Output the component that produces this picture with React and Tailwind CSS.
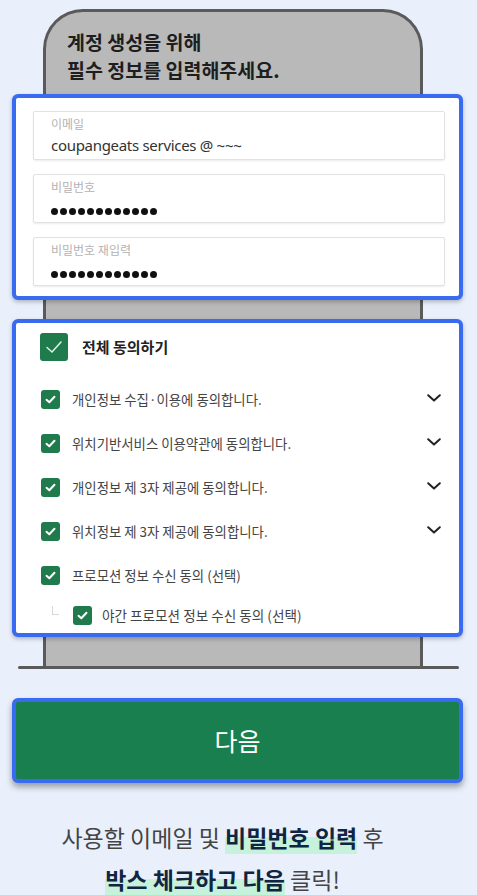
import React from "react";

const F = { fontFamily: '"Noto Sans CJK KR", "Noto Sans", sans-serif' };

function Check({ big }) {
  if (big) {
    return (
      <div className="w-[28px] h-[28px] rounded-[3px] bg-[#1f7b4c] flex items-center justify-center shrink-0">
        <svg width="22" height="22" viewBox="0 0 22 22" fill="none">
          <path d="M4 11.5 L9 16 L18 6" stroke="#d9efe2" strokeWidth="1.6" strokeLinecap="round" strokeLinejoin="round" />
        </svg>
      </div>
    );
  }
  return (
    <div className="w-[19px] h-[19px] rounded-[3px] bg-[#1f7b4c] flex items-center justify-center shrink-0">
      <svg width="13" height="13" viewBox="0 0 13 13" fill="none">
        <path d="M2.5 6.8 L5.3 9.3 L10.5 3.8" stroke="#ffffff" strokeWidth="2" strokeLinecap="round" strokeLinejoin="round" />
      </svg>
    </div>
  );
}

function Chevron() {
  return (
    <svg width="14" height="8" viewBox="0 0 14 8" fill="none">
      <path d="M1.2 1.2 L7 6.6 L12.8 1.2" stroke="#222" strokeWidth="2" strokeLinecap="round" strokeLinejoin="round" />
    </svg>
  );
}

function Dots() {
  return (
    <div className="flex gap-[2px]">
      {Array.from({ length: 12 }).map((_, i) => (
        <span key={i} className="block w-[7px] h-[7px] rounded-full bg-[#111]" />
      ))}
    </div>
  );
}

function Field({ label, children }) {
  return (
    <div className="h-[49px] border border-[#e2e2e2] rounded-[2px] bg-white shadow-[0_1px_2px_rgba(0,0,0,0.08)] pl-[17px] flex flex-col">
      <div className="text-[12px] leading-[16px] text-[#b3b3b3] mt-[4px]">{label}</div>
      <div className="h-[24px] flex items-center mt-[1px]">{children}</div>
    </div>
  );
}

function Row({ text, chevron }) {
  return (
    <div className="h-[44px] flex items-center">
      <div className="ml-[1px]"><Check /></div>
      <div className="ml-[12px] text-[13.4px] text-[#444]">{text}</div>
      <div className="flex-1" />
      {chevron && <div className="mr-[18px] mt-[-2px]"><Chevron /></div>}
    </div>
  );
}

export default function App() {
  return (
    <div className="w-[477px] h-[895px] bg-[#e9f0fc] overflow-hidden" style={F}>
      <div className="pt-[9px]">
        <div className="ml-[43px] w-[380px] border-[3px] border-b-0 border-[#5a5a5a] rounded-t-[40px] bg-[#b9b9b9] pb-[29px]">
          <div className="pl-[21px] pt-[16px] text-[19.5px] leading-[28px] font-bold text-[#1e1e1e]">
            <div>계정 생성을 위해</div>
            <div>필수 정보를 입력해주세요.</div>
          </div>

          <div className="mt-[10px] ml-[-34px] w-[451px] border-[4px] border-[#386bf0] rounded-[6px] bg-white shadow-[0_2px_4px_rgba(0,0,0,0.25)] pl-[17px] pr-[14px] pt-[13px] pb-[10px] flex flex-col gap-[14px]">
            <Field label="이메일">
              <span className="text-[15px] text-[#333] tracking-[-0.3px]" style={{ fontFamily: '"Noto Sans", sans-serif' }}>coupangeats services @ ~~~</span>
            </Field>
            <Field label="비밀번호">
              <div className="mt-[6px]"><Dots /></div>
            </Field>
            <Field label="비밀번호 재입력">
              <div className="mt-[6px]"><Dots /></div>
            </Field>
          </div>

          <div className="mt-[19px] ml-[-34px] w-[451px] border-[4px] border-[#386bf0] rounded-[6px] bg-white shadow-[0_2px_4px_rgba(0,0,0,0.25)] pl-[24px] pt-[10px] flex flex-col">
            <div className="flex items-center h-[28px]">
              <Check big />
              <div className="ml-[14px] text-[15px] font-bold text-[#222]">전체 동의하기</div>
            </div>
            <div className="mt-[16px] flex flex-col">
              <Row text="개인정보 수집·이용에 동의합니다." chevron />
              <Row text="위치기반서비스 이용약관에 동의합니다." chevron />
              <Row text="개인정보 제 3자 제공에 동의합니다." chevron />
              <Row text="위치정보 제 3자 제공에 동의합니다." chevron />
              <Row text="프로모션 정보 수신 동의 (선택)" />
              <div className="h-[36px] flex items-center">
                <div className="ml-[12px] mt-[-10px] w-[7px] h-[9px] border-l border-b border-[#d8d8d8]" />
                <div className="ml-[14px]"><Check /></div>
                <div className="ml-[10px] text-[13.6px] text-[#444]">야간 프로모션 정보 수신 동의 (선택)</div>
              </div>
            </div>
          </div>
        </div>
        <div className="ml-[18px] w-[441px] h-[3px] bg-[#5a5a5a] rounded-full" />

        <div className="mt-[29px] ml-[12px] w-[451px] h-[85px] border-[4px] border-[#386bf0] rounded-[6px] bg-[#1a7f4e] shadow-[0_4px_6px_rgba(0,0,0,0.35)] flex items-center justify-center">
          <span className="text-[25px] text-white">다음</span>
        </div>

        <div className="mt-[33px] pr-[32px] flex flex-col items-center text-[23px] leading-[42px] text-[#444]">
          <div>
            사용할 이메일 및{" "}
            <span className="font-bold text-[#102542] bg-[linear-gradient(transparent_50%,#c6f1db_50%)]">비밀번호 입력</span> 후
          </div>
          <div>
            <span className="font-bold text-[#102542] bg-[linear-gradient(transparent_50%,#c6f1db_50%)]">박스 체크하고 다음</span> 클릭!
          </div>
        </div>
      </div>
    </div>
  );
}
